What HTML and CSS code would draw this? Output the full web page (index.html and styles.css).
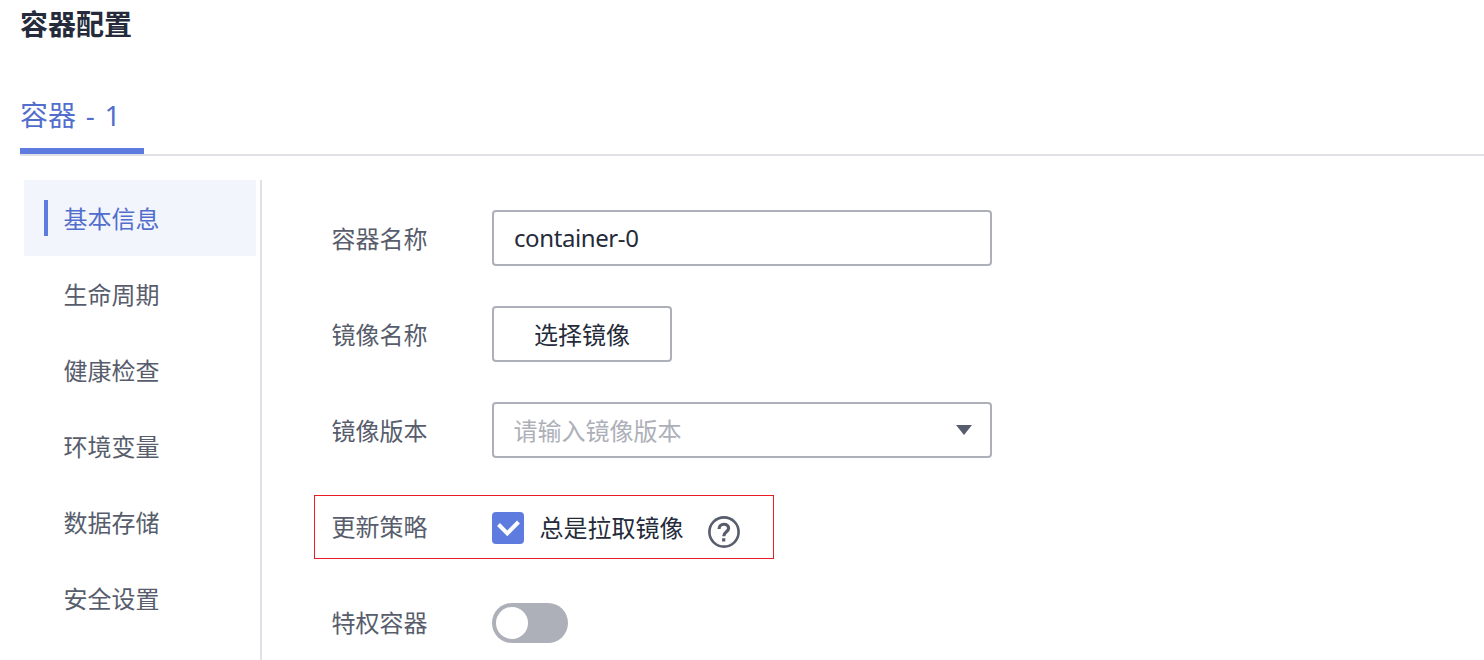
FILE: index.html
```html
<!DOCTYPE html>
<html lang="zh-CN">
<head>
<meta charset="utf-8">
<title>容器配置</title>
<link rel="stylesheet" href="styles.css">
</head>
<body>
<h1 class="title">容器配置</h1>
<div class="tabs"><div class="tab">容器 - 1</div></div>
<main class="content">
  <nav class="side">
    <a class="item active">基本信息</a>
    <a class="item">生命周期</a>
    <a class="item">健康检查</a>
    <a class="item">环境变量</a>
    <a class="item">数据存储</a>
    <a class="item">安全设置</a>
  </nav>
  <form class="form">
    <div class="row"><label class="label">容器名称</label><div class="box wide name">container-0</div></div>
    <div class="row"><label class="label">镜像名称</label><div class="box button">选择镜像</div></div>
    <div class="row"><label class="label">镜像版本</label><div class="box wide select"><span class="placeholder">请输入镜像版本</span><svg class="arrow" viewBox="0 0 16 10"><path d="M0 0H16L8 10Z"/></svg></div></div>
    <div class="row marked"><label class="label">更新策略</label><span class="check"><svg viewBox="0 0 32 32"><path d="M6.5 12.5L15.3 21.3L26.5 10"/></svg></span><span class="check-text">总是拉取镜像</span><svg class="help" viewBox="0 0 32 32"><circle cx="16" cy="16" r="14.6"/><path class="mark" d="M11 13C11.2 6.8 20.6 6.8 20.6 12.2C20.6 15.8 15.7 15.6 15.7 20.3M15.7 22.2V25.6"/></svg></div>
    <div class="row last"><label class="label">特权容器</label><span class="switch"><span class="knob"></span></span></div>
  </form>
</main>
</body>
</html>
```

FILE: styles.css
```css
* { box-sizing: border-box; }
body { margin: 0; height: 660px; overflow: hidden; background: #fff; color: #252b3a; font: 24px/36px "Noto Sans", "Noto Sans CJK SC", sans-serif; }
.title { margin: 0; padding: 3px 0 0 20px; height: 90px; font-size: 28px; line-height: 42px; font-weight: 700; }
.tabs { margin-left: 20px; height: 66px; border-bottom: 2px solid #dfe1e6; }
.tab { width: 124px; height: 64px; border-bottom: 6px solid #5e7ce0; color: #526ecc; font-size: 28px; line-height: 50px; white-space: nowrap; word-spacing: 2.5px; }
.content { display: flex; padding: 24px 0 0 24px; }
.side { width: 238px; height: 480px; padding-right: 4px; border-right: 2px solid #dfe1e6; }
.item { display: flex; align-items: center; height: 76px; padding: 2px 0 0 39.5px; color: #575d6c; }
.active { padding: 2px 0 0 20px; background: #f2f5fc; color: #526ecc; }
.active::before { content: ""; width: 4px; height: 36px; margin: -2px 15.5px 0 0; background: #5e7ce0; }
.form { display: flex; flex-direction: column; gap: 40px; padding: 30px 0 0 52px; }
.row { display: flex; align-items: center; height: 56px; padding-left: 17.5px; }
.label { width: 160.5px; padding-top: 2px; color: #575d6c; }
.box { display: flex; align-items: center; height: 56px; border: 2px solid #adb0b8; border-radius: 4px; }
.wide { width: 500px; padding: 0 20px; }
.name { letter-spacing: -0.4px; }
.button { width: 180px; padding-top: 2px; justify-content: center; }
.select { justify-content: space-between; color: #adb0b8; padding: 0 18px 0 19.5px; }
.placeholder { padding-top: 2px; }
.arrow { width: 16px; height: 10px; fill: #575d6c; }
.marked { width: 460px; height: 64px; margin: -3px 0 -5px; padding-left: 16.5px; border: 1px solid #e81c24; }
.marked .label { padding-top: 0; }
.check { width: 32px; height: 32px; margin-top: 2px; border-radius: 4px; background: #5e7ce0; }
.check svg { display: block; fill: none; stroke: #fff; stroke-width: 4; }
.check-text { margin-left: 15.5px; padding-top: 2px; }
.help { width: 32px; height: 32px; margin: 9px 0 0 24.5px; fill: none; stroke: #575d6c; stroke-width: 2.6; }
.mark { stroke-width: 3.2; }
.last .label { padding-top: 2px; }
.switch { display: flex; align-items: center; width: 76px; height: 40px; margin-top: 2px; padding: 4px; border-radius: 20px; background: #adb0b8; }
.knob { width: 32px; height: 32px; border-radius: 50%; background: #fff; }
```
